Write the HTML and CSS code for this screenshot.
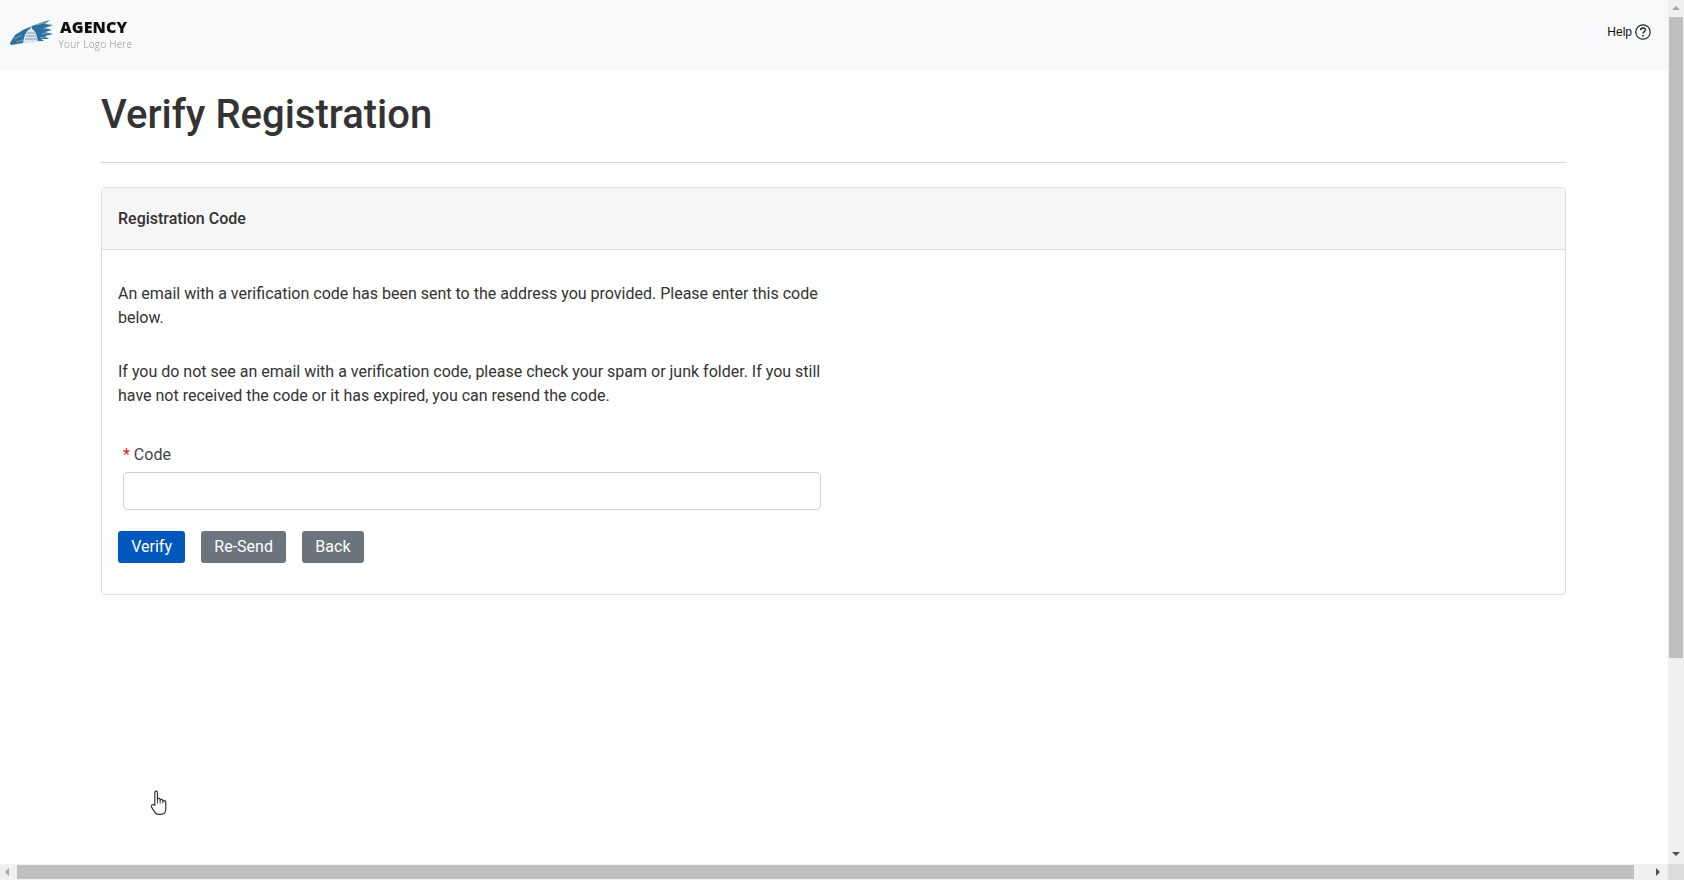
FILE: index.html
```html
<!DOCTYPE html>
<html lang="en">
<head>
<meta charset="utf-8">
<title>Verify Registration</title>
<link rel="stylesheet" href="styles.css">
</head>
<body>
<div class="viewport">
  <div class="page">
    <header class="topbar">
      <div class="logo">
        <svg class="logo-mark" width="44" height="28" viewBox="0 0 44 28" aria-hidden="true">
          <path fill="#2a6f9e" d="M0 24 L5 16 L13 11 L22 7 L33 3 L40 1 L35 5 L43 6 L35 9 L42 11 L35 13 L43 15 L35 17 L39 20 L31 20 L34 22 L24 22 L13 24 L1 26 Z"/>
          <path fill="none" stroke="#f8f9fa" stroke-width="0.4" d="M4 20 L12 16 M26 6 L38 3 M33 10 L41 8 M32 15 L41 13 M30 19 L38 18 M6 23 L13 21"/>
          <path fill="#dde4ea" d="M13 24 C14 16 17 11 20 10 L21 6 L22 10 C25 11 27 16 28 23 Z"/>
          <path stroke="#5f93b5" stroke-width="0.8" fill="none" d="M17 14 H25 M16 17 H26 M15 20 H27"/>
        </svg>
        <div class="logo-text">
          <span class="logo-name">AGENCY</span>
          <span class="logo-tag">Your Logo Here</span>
        </div>
      </div>
      <a class="help" href="#">
        <span>Help</span>
        <svg width="16" height="16" viewBox="0 0 16 16" aria-hidden="true">
          <circle cx="8" cy="8" r="7.2" fill="none" stroke="#222" stroke-width="1.2"/>
          <path d="M5.6 6.2 C5.6 4.8 6.7 4 8 4 C9.4 4 10.4 4.9 10.4 6 C10.4 7.6 8 7.7 8 9.6" fill="none" stroke="#222" stroke-width="1.3"/>
          <circle cx="8" cy="11.7" r="0.9" fill="#222"/>
        </svg>
      </a>
    </header>
    <main class="content">
      <h1 class="title">Verify Registration</h1>
      <hr class="rule">
      <section class="card">
        <div class="card-header">Registration Code</div>
        <div class="card-body">
          <div class="copy">
            <p>An email with a verification code has been sent to the address you provided. Please enter this code below.</p>
            <p>If you do not see an email with a verification code, please check your spam or junk folder. If you still have not received the code or it has expired, you can resend the code.</p>
          </div>
          <div class="field">
            <label class="field-label" for="code"><span class="req">*</span> Code</label>
            <input class="field-input" id="code" type="text">
          </div>
          <div class="actions">
            <button class="btn btn-primary" type="button">Verify</button>
            <button class="btn btn-secondary" type="button">Re-Send</button>
            <button class="btn btn-secondary" type="button">Back</button>
          </div>
        </div>
      </section>
    </main>
  </div>
  <div class="vscroll">
    <span class="arrow arrow-up"></span>
    <div class="vtrack"><div class="vthumb"></div></div>
    <span class="arrow arrow-down"></span>
  </div>
  <div class="hscroll">
    <span class="arrow arrow-left"></span>
    <div class="htrack"><div class="hthumb"></div></div>
    <span class="arrow arrow-right"></span>
  </div>
  <div class="corner"></div>
  <svg class="cursor" width="19" height="25" viewBox="0 0 16 24" aria-hidden="true">
    <path fill="#fff" stroke="#2b2f38" stroke-width="1.1" stroke-linejoin="round" d="M4.5 14.5 V2.4 C4.5 0.6 7 0.6 7 2.4 V9 C7 7.6 9.6 7.6 9.6 9.2 V10 C9.6 8.6 12.2 8.6 12.2 10.2 V11 C12.2 9.8 15 9.8 15 11.4 V18 C15 21.5 13 23.4 10 23.4 H8.4 C6.2 23.4 5 22.6 4 20.8 L1.2 16.2 C0.4 14.6 2.6 13.2 3.8 14.6 Z"/>
    <path fill="none" stroke="#2b2f38" stroke-width="0.9" d="M7 9 V13 M9.6 10 V13 M12.2 11 V13"/>
  </svg>
</div>
</body>
</html>
```

FILE: styles.css
```css
* { box-sizing: border-box; }

html, body {
  margin: 0;
  height: 100%;
  overflow: hidden;
  background: #fff;
}

body {
  font-family: Roboto, "Liberation Sans", sans-serif;
  font-size: 16px;
  line-height: 24px;
  color: #333;
}

.viewport {
  position: relative;
  width: 1684px;
  height: 880px;
  display: grid;
  grid-template-columns: 1668px 16px;
  grid-template-rows: 864px 16px;
  overflow: hidden;
}

.page { overflow: hidden; }

.topbar {
  height: 70px;
  background: #f8f9fa;
  display: flex;
  justify-content: space-between;
  align-items: flex-start;
  padding: 16px 16px 0 10px;
}

.logo {
  display: flex;
  align-items: flex-start;
  gap: 5px;
  filter: blur(0.4px);
}

.logo-mark { margin-top: 3px; }

.logo-text {
  display: flex;
  flex-direction: column;
  margin-top: 2px;
}

.logo-name {
  font-family: "Open Sans", sans-serif;
  font-weight: 800;
  font-size: 16px;
  letter-spacing: 0.1px;
  line-height: 19px;
  margin-left: 1px;
  color: #111;
}

.logo-tag {
  font-family: "Open Sans", sans-serif;
  font-weight: 300;
  font-size: 10px;
  letter-spacing: 0.25px;
  line-height: 15px;
  margin-left: -0.5px;
  color: #8f8f8f;
}

.help {
  display: flex;
  align-items: center;
  gap: 3px;
  margin-top: 8px;
  font-family: "Liberation Sans", sans-serif;
  font-size: 12px;
  line-height: 16px;
  color: #111;
  text-decoration: none;
}

.help svg { margin-right: 1px; }

.content { padding: 21px 102px 0 101px; }

.title {
  margin: 0;
  font-size: 40px;
  font-weight: 500;
  line-height: 48px;
  color: #333;
}

.rule {
  margin: 23px 0 24px;
  border: 0;
  border-top: 1px solid #d8dade;
}

.card {
  border: 1px solid #dfdfdf;
  border-radius: 4px;
  height: 408px;
}

.card-header {
  height: 62px;
  padding: 0 16px;
  display: flex;
  align-items: center;
  background: #f6f6f6;
  border-bottom: 1px solid #dcdcdc;
  border-radius: 3px 3px 0 0;
  font-weight: 500;
}

.card-body { padding: 32px 16px 0; }

.copy { width: 710px; }

.copy p { margin: 0 0 30px; }

.field {
  width: 698px;
  margin-left: 5px;
  margin-top: 35px;
}

.field-label {
  display: block;
  height: 29px;
  line-height: 24px;
  color: #444;
}

.req { color: #e02020; }

.field-input {
  display: block;
  width: 100%;
  height: 38px;
  border: 1px solid #ced0d8;
  border-radius: 4px;
  background: #fff;
}

.actions {
  display: flex;
  gap: 16px;
  margin-top: 21px;
}

.btn {
  height: 32px;
  padding: 0 13.2px;
  border: 0;
  border-radius: 3px;
  font-family: inherit;
  font-size: 16px;
  font-weight: 400;
  line-height: 32px;
  color: #fff;
}

.btn-primary { background: #0058bd; }

.btn-secondary { background: #6c757d; }

.vscroll, .hscroll {
  display: flex;
  align-items: center;
  background: #f0f0f0;
}

.vscroll { flex-direction: column; }

.vtrack { flex: 1; width: 100%; padding: 0 1px; }

.vthumb { height: 641px; background: #bfbfbf; }

.htrack { flex: 1; height: 100%; padding: 1px 0; }

.hthumb { width: 1617px; height: 100%; background: #bfbfbf; }

.arrow {
  flex: none;
  width: 16px;
  height: 17px;
  position: relative;
}

.arrow::before {
  content: "";
  position: absolute;
  left: 4px;
  top: 6px;
  border: 4px solid transparent;
}

.arrow-up::before { top: 2px; border-bottom-color: #a3a3a3; }
.arrow-down::before { top: 5px; border-top-color: #505050; }
.arrow-left { width: 17px; height: 16px; }
.arrow-left::before { left: 1px; top: 4px; border-right-color: #a3a3a3; }
.arrow-right { width: 17px; height: 16px; }
.arrow-right::before { left: 5px; top: 4px; border-left-color: #505050; }

.corner { background: #dcdcdc; }

.cursor {
  position: absolute;
  left: 149px;
  top: 790px;
}
```
